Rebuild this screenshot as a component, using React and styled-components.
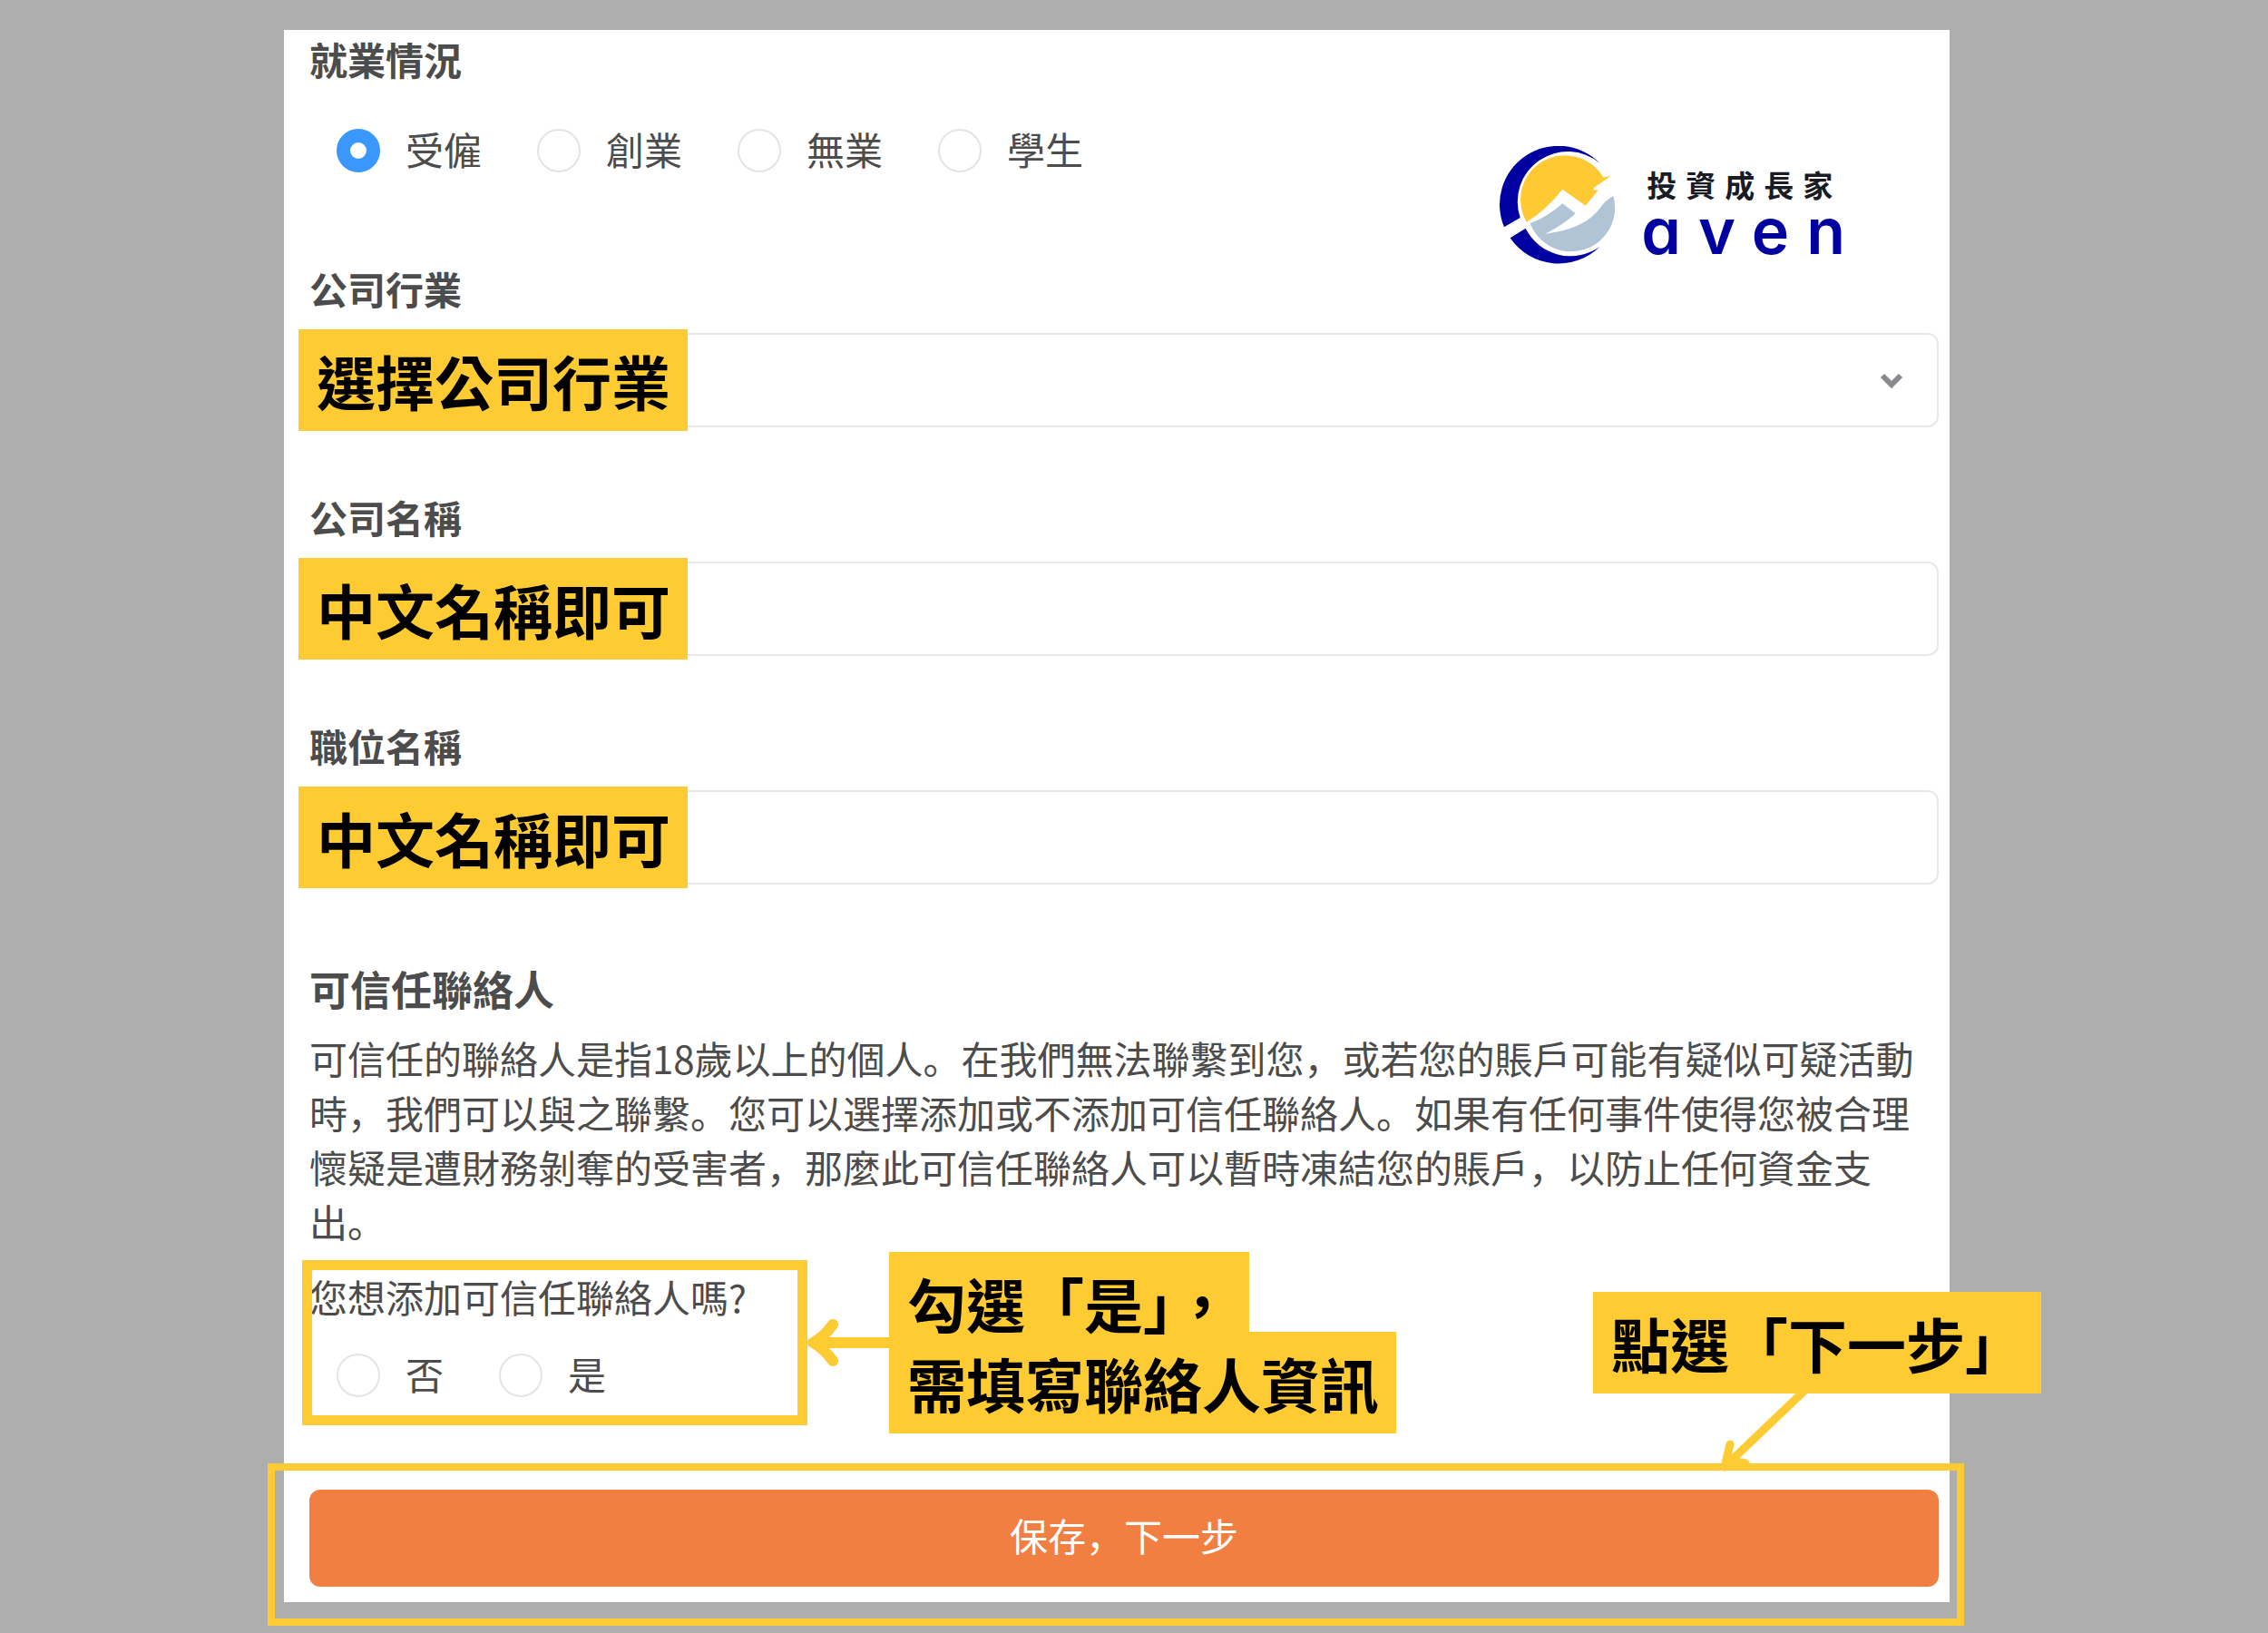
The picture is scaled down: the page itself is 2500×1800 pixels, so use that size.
import React, { useState } from 'react'
import { styled, createGlobalStyle } from 'styled-components'

const statuses = ['受僱', '創業', '無業', '學生']
const answers = ['否', '是']

function RadioList({ name, options, value, onChange }) {
  return (
    <Radios>
      {options.map((option) => (
        <RadioLabel key={option}>
          <Radio
            type="radio"
            name={name}
            checked={value === option}
            onChange={() => onChange(option)}
          />
          <span>{option}</span>
        </RadioLabel>
      ))}
    </Radios>
  )
}

function Brand() {
  return (
    <BrandBox>
      <svg width="128" height="130" viewBox="94 94 384 390" aria-hidden="true">
        <path
          fill="#0000a0"
          d="M425 150A194 194 0 0 0 109 362L162 331A166 166 0 0 1 425 150ZM129 398A194 194 0 0 0 425 427A166 166 0 0 1 180 366Z"
        />
        <path
          fill="#ffc933"
          d="M183 345A145 145 0 0 1 437 198L463 192L414 226Q402 232 404 238L420 240L378 291L302 237Q245 308 183 345Z"
        />
        <path
          fill="#b0c4d6"
          d="M195 350Q250 330 302 284L345 317Q305 355 245 384Q375 368 425 300Q445 272 470 259A145 145 0 0 1 195 350Z"
        />
      </svg>
      <div>
        <BrandName>投資成長家</BrandName>
        <BrandMark>aven</BrandMark>
      </div>
    </BrandBox>
  )
}

function App() {
  const [status, setStatus] = useState('受僱')
  const [contact, setContact] = useState('')

  return (
    <Page>
      <GlobalStyle />
      <Card>
        <Top>
          <Group>
            <Legend>就業情況</Legend>
            <RadioList name="status" options={statuses} value={status} onChange={setStatus} />
          </Group>
          <Brand />
        </Top>

        <Field>
          <Label htmlFor="industry">公司行業</Label>
          <Control>
            <Select id="industry" defaultValue="">
              <option value=""></option>
            </Select>
            <Chevron width="28" height="18" viewBox="0 0 28 18" aria-hidden="true">
              <path d="M4 4L14 14L24 4" fill="none" stroke="#8b8890" strokeWidth="6" />
            </Chevron>
            <Tag>選擇公司行業</Tag>
          </Control>
        </Field>

        <Field>
          <Label htmlFor="company">公司名稱</Label>
          <Control>
            <Input id="company" type="text" />
            <Tag>中文名稱即可</Tag>
          </Control>
        </Field>

        <Field>
          <Label htmlFor="position">職位名稱</Label>
          <Control>
            <Input id="position" type="text" />
            <Tag>中文名稱即可</Tag>
          </Control>
        </Field>

        <Title>可信任聯絡人</Title>
        <Text>
          可信任的聯絡人是指18歲以上的個人。在我們無法聯繫到您，或若您的賬戶可能有疑似可疑活動時，我們可以與之聯繫。您可以選擇添加或不添加可信任聯絡人。如果有任何事件使得您被合理懷疑是遭財務剝奪的受害者，那麼此可信任聯絡人可以暫時凍結您的賬戶，以防止任何資金支出。
        </Text>

        <Question>
          <Group>
            <Legend $plain>您想添加可信任聯絡人嗎?</Legend>
            <RadioList name="contact" options={answers} value={contact} onChange={setContact} />
          </Group>
          <ContactNote>
            <svg width="92" height="56" viewBox="0 0 92 56" aria-hidden="true">
              <path
                d="M92 28H8M30 8Q20 22 8 28Q20 34 30 48"
                fill="none"
                stroke="#ffcb33"
                strokeWidth="12"
                strokeLinecap="round"
                strokeLinejoin="round"
              />
            </svg>
            <div>
              <NoteLine>勾選「是」，</NoteLine>
              <NoteLine>需填寫聯絡人資訊</NoteLine>
            </div>
          </ContactNote>
        </Question>

        <Actions>
          <Submit type="button">保存，下一步</Submit>
          <NextNote>
            <NoteLine>點選「下一步」</NoteLine>
            <svg width="240" height="86" viewBox="0 0 240 86" aria-hidden="true">
              <path
                d="M234 -4L147 79M151 56L145 81Q158 74 168 77"
                fill="none"
                stroke="#ffcb33"
                strokeWidth="9"
                strokeLinecap="round"
                strokeLinejoin="round"
              />
            </svg>
          </NextNote>
        </Actions>
      </Card>
    </Page>
  )
}

export default App

const GlobalStyle = createGlobalStyle`
*,
*::after {
  box-sizing: border-box;
}

body {
  margin: 0;
  background: #aeaeae;
  font-family: 'Noto Sans CJK SC', sans-serif;
  font-size: 42px;
  line-height: 60px;
  color: #4c4c4c;
}

svg {
  display: block;
}
`

const Page = styled.main`
  padding: 33px 351px 34px 313px;
`

const Card = styled.form`
  padding: 2px 12px 17px 28px;
  background: #fff;
`

const Top = styled.div`
  display: flex;
  justify-content: space-between;
  margin-bottom: 92px;
`

const Group = styled.fieldset`
  min-width: 0;
  margin: 0;
  padding: 0;
  border: 0;
`

const Legend = styled.legend`
  padding: 0;
  margin-bottom: ${({ $plain }) => ($plain ? '27px' : '41px')};
  font-weight: ${({ $plain }) => ($plain ? 400 : 700)};
`

const Radios = styled.div`
  display: flex;
  gap: 61px;
  padding-left: 30px;
`

const RadioLabel = styled.label`
  display: flex;
  align-items: center;
  gap: 28px;
  height: 60px;

  span {
    padding-bottom: 4px;
  }
`

const Radio = styled.input`
  appearance: none;
  width: 48px;
  height: 48px;
  margin: 0;
  border: 2px solid #e4e4e4;
  border-radius: 50%;
  background: #fff;

  &:checked {
    border: 15px solid #3a97fb;
  }
`

const BrandBox = styled.div`
  display: flex;
  gap: 28px;
  height: 161px;
  padding-top: 126px;
  margin-right: 84px;
`

const BrandName = styled.div`
  margin-top: 18px;
  padding-left: 6px;
  font-family: 'Noto Sans CJK TC', sans-serif;
  font-weight: 700;
  font-size: 33px;
  line-height: 48px;
  letter-spacing: 10px;
  color: #1b1b26;
`

const BrandMark = styled.div`
  margin-top: 4px;
  font-family: Inter, sans-serif;
  font-feature-settings: 'cv11' on;
  font-weight: 600;
  font-size: 70px;
  line-height: 48px;
  letter-spacing: 19px;
  color: #0000a0;
`

const Field = styled.div`
  margin-bottom: 69px;
`

const Label = styled.label`
  display: block;
  margin-bottom: 19px;
  font-weight: 700;
`

const Control = styled.div`
  position: relative;
`

const Input = styled.input`
  display: block;
  width: 100%;
  height: 104px;
  padding: 0 28px;
  border: 2px solid #e8e8e8;
  border-radius: 12px;
  background: #fff;
  font: inherit;
  color: inherit;
`

const Select = styled(Input).attrs({ as: 'select' })`
  appearance: none;
`

const Chevron = styled.svg`
  position: absolute;
  top: 43px;
  right: 38px;
  pointer-events: none;
`

const Tag = styled.span`
  position: absolute;
  top: -4px;
  left: -12px;
  padding: 12px 19px 12px 20px;
  background: #ffcb33;
  font-family: 'Noto Sans CJK TC', sans-serif;
  font-weight: 700;
  font-size: 65px;
  line-height: 88px;
  color: #000;
  white-space: nowrap;
  pointer-events: none;
`

const Title = styled.h2`
  margin: 85px 0 16px;
  font-weight: 700;
  font-size: 45px;
  line-height: 60px;
`

const Text = styled.p`
  margin: 0 0 23px;
  text-spacing-trim: space-all;
`

const Question = styled.div`
  position: relative;
  margin-bottom: 96px;

  /* highlight drawn over the question */
  &::after {
    content: '';
    position: absolute;
    top: -10px;
    left: -8px;
    width: 557px;
    height: 182px;
    border: 11px solid #ffcb33;
    pointer-events: none;
  }
`

const ContactNote = styled.div`
  position: absolute;
  top: -19px;
  left: 547px;
  display: flex;
  align-items: center;
`

const NoteLine = styled.div`
  width: fit-content;
  padding: 12px 19px 12px 20px;
  background: #ffcb33;
  font-family: 'Noto Sans CJK TC', sans-serif;
  font-weight: 700;
  font-size: 65px;
  line-height: 88px;
  color: #000;
  white-space: nowrap;

  & + & {
    margin-top: -24px;
  }
`

const Actions = styled.div`
  position: relative;

  &::after {
    content: '';
    position: absolute;
    inset: -29px -28px -43px -46px;
    border: 8px solid #ffcb33;
    pointer-events: none;
  }
`

const Submit = styled.button`
  display: block;
  width: 100%;
  height: 107px;
  padding: 0 0 8px;
  border: 0;
  border-radius: 12px;
  background: #f17f42;
  font: inherit;
  color: #fff;
`

const NextNote = styled.div`
  position: absolute;
  right: -113px;
  bottom: 127px;
  pointer-events: none;
`
